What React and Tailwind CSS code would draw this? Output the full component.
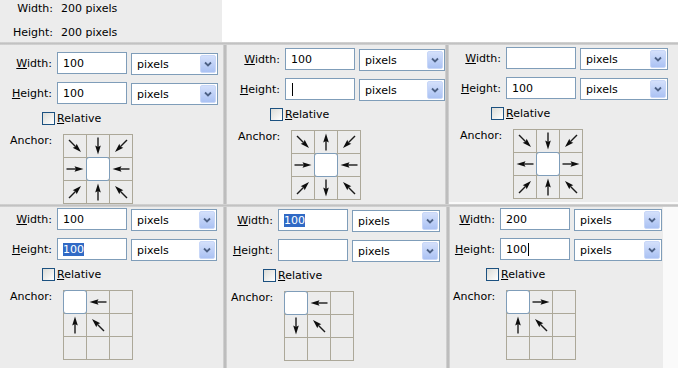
import React from "react";

function Arrow({ a }) {
  return (
    <svg width="22" height="22" viewBox="0 0 22 22" className="block">
      <g transform={`rotate(${a} 11 11)`}>
        <line x1="2.5" y1="11" x2="12" y2="11" stroke="#1a1a1a" strokeWidth="1.4" />
        <path d="M19.5 11 L10.5 8.2 L12 11 L10.5 13.8 Z" fill="#0d0d0d" />
      </g>
    </svg>
  );
}

function AnchorGrid({ cells }) {
  return (
    <div className="grid grid-cols-[23px_23px_23px] border-l border-t border-[#aca899]">
      {cells.map((c, i) => (
        <div key={i} className="w-[23px] h-[23px] border-r border-b border-[#aca899]">
          {c === "sel" ? (
            <div className="-ml-px -mt-px w-[24px] h-[24px] rounded-[3px] border border-[#7f9db9] bg-white" />
          ) : c === null ? null : (
            <Arrow a={c} />
          )}
        </div>
      ))}
    </div>
  );
}

function Field({ value }) {
  return (
    <div className="ml-[5px] w-[70px] h-[22px] border border-[#7f9db9] bg-white flex items-center pl-[5px] leading-[13px]">
      {value.sel ? (
        <span className="bg-[#316ac5] text-white">{value.text}</span>
      ) : (
        <span>{value.text}</span>
      )}
      {value.caret && <span className="w-px h-[13px] bg-black ml-px" />}
    </div>
  );
}

function Dropdown({ ddw }) {
  return (
    <div className={`ml-[4px] mt-px ${ddw} h-[22px] border border-[#7f9db9] bg-white flex`}>
      <span className="flex-1 pl-[5px] pt-[4px] leading-[13px]">pixels</span>
      <div className="m-px w-[16px] rounded-[2px] bg-linear-to-b from-[#d4e0fb] to-[#abc2f3] border border-[#c8d7f8] flex items-center justify-center">
        <svg width="8" height="6" viewBox="0 0 8 6">
          <path d="M1 1.5 L4 4.5 L7 1.5" stroke="#4d6185" strokeWidth="1.8" fill="none" />
        </svg>
      </div>
    </div>
  );
}

function Row({ label, lw, value, ddw }) {
  return (
    <div className="flex items-start h-[22px]">
      <div className={`${lw} h-[22px] flex items-center justify-end leading-[13px]`}>
        <span>
          <span className="underline">{label[0]}</span>
          {label.slice(1)}:
        </span>
      </div>
      <Field value={value} />
      <Dropdown ddw={ddw} />
    </div>
  );
}

function Panel({ cfg, className }) {
  const { pt, lw, cb, an, w, h, cells, ddw } = cfg;
  return (
    <div className={`flex flex-col bg-[#ececec] ${pt} ${className}`}>
      <Row label="Width" lw={lw} value={w} ddw={ddw} />
      <div className="mt-[8px]">
        <Row label="Height" lw={lw} value={h} ddw={ddw} />
      </div>
      <div className={`mt-[8px] flex items-center ${cb}`}>
        <div className="w-[13px] h-[13px] border border-[#1c5180] bg-linear-to-br from-[#dcdcd7] to-white" />
        <span className="ml-[2px] leading-[13px]">
          <span className="underline">R</span>elative
        </span>
      </div>
      <div className={`mt-[9px] flex items-start ${an}`}>
        <span className="w-[53px] leading-[13px]">Anchor:</span>
        <AnchorGrid cells={cells} />
      </div>
    </div>
  );
}

const V = (text, extra = {}) => ({ text, ...extra });

const P1 = {
  pt: "pt-[7px]", lw: "w-[52px]", cb: "ml-[42px]", an: "ml-[10px]", ddw: "w-[87px]",
  w: V("100"), h: V("100"),
  cells: [45, 90, 135, 0, "sel", 180, -45, -90, -135],
};
const P2 = {
  pt: "pt-[3px]", lw: "w-[53px]", cb: "ml-[43px]", an: "ml-[11px]", ddw: "w-[86px]",
  w: V("100"), h: V("", { caret: true }),
  cells: [45, -90, 135, 0, "sel", 180, -45, 90, -135],
};
const P3 = {
  pt: "pt-[2px]", lw: "w-[52px]", cb: "ml-[42px]", an: "ml-[11px]", ddw: "w-[88px]",
  w: V(""), h: V("100"),
  cells: [45, 90, 135, 180, "sel", 0, -45, -90, -135],
};
const P4 = {
  pt: "pt-[1px]", lw: "w-[52px]", cb: "ml-[42px]", an: "ml-[10px]", ddw: "w-[86px]",
  w: V("100"), h: V("100", { sel: true }),
  cells: ["sel", 180, null, -90, -135, null, null, null, null],
};
const P5 = {
  pt: "pt-[2px]", lw: "w-[46px]", cb: "ml-[36px]", an: "ml-[4px]", ddw: "w-[88px]",
  w: V("100", { sel: true }), h: V(""),
  cells: ["sel", 180, null, 90, -135, null, null, null, null],
};
const P6 = {
  pt: "pt-[1px]", lw: "w-[45px]", cb: "ml-[36px]", an: "ml-[3px]", ddw: "w-[88px]",
  w: V("200"), h: V("100", { caret: true }),
  cells: ["sel", 0, null, -90, -135, null, null, null, null],
};

function VSep() {
  return <div className="w-[4px] shrink-0 bg-linear-to-r from-[#d8d8d8] via-[#b4b4b4] to-[#d8d8d8]" />;
}
function HSep() {
  return <div className="h-[3px] shrink-0 bg-linear-to-b from-[#d6d6d6] via-[#c2c2c2] to-[#d6d6d6]" />;
}

export default function App() {
  return (
    <div className="w-[678px] h-[368px] overflow-hidden flex flex-col text-[11px] text-black font-['DejaVu_Sans',sans-serif] bg-white">
      <div className="flex h-[42px] shrink-0">
        <div className="w-[222px] bg-[#ececec] flex flex-col pt-[2px]">
          <div className="flex leading-[13px]">
            <span className="w-[53px] text-right">Width:</span>
            <span className="ml-[8px]">200 pixels</span>
          </div>
          <div className="flex leading-[13px] mt-[11px]">
            <span className="w-[53px] text-right">Height:</span>
            <span className="ml-[8px]">200 pixels</span>
          </div>
        </div>
        <div className="flex-1 bg-white" />
      </div>
      <HSep />
      <div className="flex h-[159px] shrink-0">
        <Panel cfg={P1} className="w-[223px]" />
        <VSep />
        <Panel cfg={P2} className="w-[218px]" />
        <VSep />
        <div className="flex-1 flex flex-col">
          <Panel cfg={P3} className="flex-1" />
          <div className="h-[2px] bg-[#fafafa]" />
        </div>
      </div>
      <HSep />
      <div className="flex flex-1">
        <Panel cfg={P4} className="w-[223px]" />
        <VSep />
        <Panel cfg={P5} className="w-[219px]" />
        <VSep />
        <div className="flex-1 flex">
          <Panel cfg={P6} className="w-[213px]" />
          <div className="flex-1 bg-[#fafafa]" />
        </div>
      </div>
    </div>
  );
}
